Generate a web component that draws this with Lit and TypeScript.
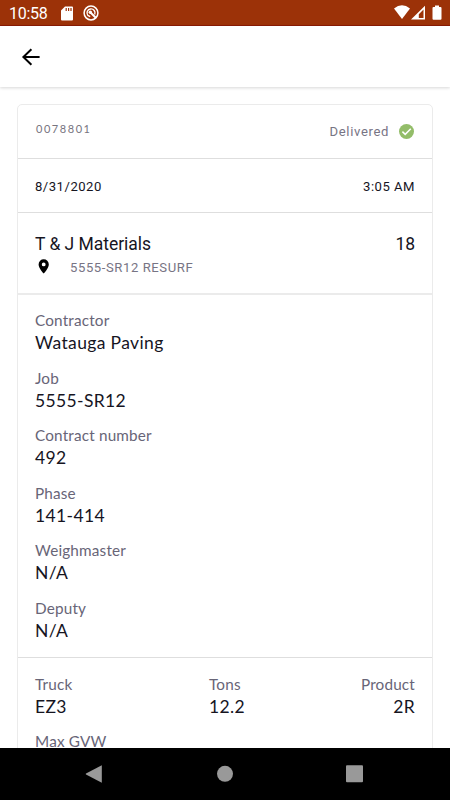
import { LitElement, html, css } from "lit";
import { customElement, property } from "lit/decorators.js";

@customElement("status-bar")
class StatusBar extends LitElement {
  static styles = css`
    :host { display: flex; align-items: center; height: 26px; background: #9c3208; color: #fff; box-sizing: border-box; border-bottom: 1px solid #8b1a04; padding: 1px 0 0 9px; }
    .time { font: 400 16px/24px Roboto, sans-serif; letter-spacing: -0.25px; width: 52px; padding-top: 2px; height: 24px; }
    .spacer { flex: 1; }
    svg { display: block; fill: #fff; }
    .sd { margin-right: 10px; }
  `;
  render() {
    return html`
      <span class="time">10:58</span>
      <svg class="sd" width="12" height="15" viewBox="0 0 12 15"><path fill-rule="evenodd" d="M4 .5h7q1 0 1 1v12q0 1-1 1H1q-1 0-1-1v-9zM4.6 2v3h1.2V2zM7 2v3h1.2V2zM9.4 2v3h1.2V2z"/></svg>
      <svg width="16" height="16" viewBox="0 0 16 16"><g fill="none" stroke="#fff"><circle cx="8" cy="8" r="6.9" stroke-width="1.5"/><path stroke-width="1.4" d="M4.8 10.3A4 4 0 1 1 11.7 9.5M4.8 10.3 7.2 11.6"/><path stroke-width="2" d="M7.3 7.2 12.8 12.7"/></g><circle cx="7.3" cy="7.3" r="1.7"/></svg>
      <span class="spacer"></span>
      <svg width="56" height="16" viewBox="0 0 56 16"><path d="M0 3.4Q8-2.7 16 3.4L8 14z"/><path fill-rule="evenodd" d="M31 .8V14.5H17zM29.5 4.6 24.8 9.2V12.9H29.5z"/><path d="M41 .6h4V2h1.5q1 0 1 1v10.8q0 1-1 1h-7q-1 0-1-1V3q0-1 1-1H41z"/></svg>
    `;
  }
}

@customElement("ticket-field")
class TicketField extends LitElement {
  @property() label = "";
  @property() value = "";
  static styles = css`
    :host { display: block; font-family: Lato, sans-serif; font-weight: 400; white-space: nowrap; }
    .label { font-size: 15.3px; line-height: 21px; letter-spacing: 0.17px; color: #686577; }
    .value { font-size: 17.5px; line-height: 22px; letter-spacing: 0.36px; color: #16151f; min-height: 22px; padding-top: 1px; margin-bottom: -1px; }
  `;
  render() {
    return html`<div class="label">${this.label}</div><div class="value">${this.value}</div>`;
  }
}

@customElement("app-root")
class AppRoot extends LitElement {
  static styles = css`
    :host { display: flex; flex-direction: column; height: 800px; width: 450px; overflow: hidden; background: #fff; font-family: Roboto, sans-serif; font-weight: 400; color: #16151f; }
    .header { flex: none; height: 61px; display: flex; align-items: center; padding-left: 19px; box-sizing: border-box; box-shadow: 0 1px 3px rgba(0,0,0,.16); }
    .header svg { display: block; }
    .content { flex: 1; min-height: 0; overflow: hidden; padding: 17px 17px 0; }
    .card { border: 1px solid #ebebeb; border-radius: 5px; height: 760px; }
    .row { display: flex; justify-content: space-between; padding: 0 17px; box-sizing: border-box; border-bottom: 1px solid #dedede; white-space: nowrap; }
    .top { height: 54px; }
    .number { font: 400 11px/16px Lato, sans-serif; letter-spacing: 1.55px; color: #777480; padding: 16px 0 0 1px; }
    .status { display: flex; align-items: center; height: 16px; margin-top: 18px; font-size: 13.1px; letter-spacing: .63px; color: #777484; }
    .status span { padding-top: 1px; }
    .status svg { margin-left: 9px; }
    .when { height: 54px; align-items: center; font-size: 13.1px; letter-spacing: .5px; padding-top: 1px; }
    .site { height: 82px; border-bottom: 2px solid #ebebeb; padding-top: 20px; }
    .name { font-size: 17.5px; line-height: 22px; letter-spacing: -.03px; }
    .place { display: flex; align-items: center; height: 24px; font-size: 13.1px; letter-spacing: .58px; color: #777484; }
    .place svg { margin: -1px 18px 0 0; }
    .fields { padding: 15px 17px 16px; display: flex; flex-direction: column; gap: 14.5px; border-bottom: 1px solid #dedede; }
    .load { display: grid; grid-template-columns: 174px 1fr auto; row-gap: 14.5px; padding: 16px 17px 0; }
    .right { text-align: right; }
    .nav { flex: none; height: 52px; background: #000; display: block; }
  `;
  fields = [["Contractor", "Watauga Paving"], ["Job", "5555-SR12"], ["Contract number", "492"], ["Phase", "141-414"], ["Weighmaster", "N/A"], ["Deputy", "N/A"]];
  render() {
    return html`
      <status-bar></status-bar>
      <div class="header"><svg width="24" height="24" viewBox="0 0 24 24"><path d="M20.6 12H4.5M12.4 4.3 4.4 12l8 7.7" fill="none" stroke="#000" stroke-width="2"/></svg></div>
      <div class="content"><div class="card">
        <div class="row top">
          <div class="number">0078801</div>
          <div class="status"><span>Delivered</span><svg width="17" height="17" viewBox="0 0 17 17"><circle cx="8.5" cy="8.5" r="7.5" fill="#93bd69"/><path d="M4.4 8.6 7.2 11.4 12.8 5.7" fill="none" stroke="#fff" stroke-width="1.5"/></svg></div>
        </div>
        <div class="row when"><span>8/31/2020</span><span>3:05 AM</span></div>
        <div class="row site">
          <div><div class="name">T &amp; J Materials</div>
          <div class="place"><svg width="17" height="17" viewBox="0 0 17 17"><path fill="#000" fill-rule="evenodd" d="M8.7 1.3a5.1 5.1 0 0 0-5.1 5.1c0 3.8 5.1 9.1 5.1 9.1s5.1-5.3 5.1-9.1a5.1 5.1 0 0 0-5.1-5.1m0 3.2a1.9 1.9 0 1 1 0 3.8 1.9 1.9 0 0 1 0-3.8"/></svg>5555-SR12 RESURF</div></div>
          <div class="name">18</div>
        </div>
        <div class="fields">${this.fields.map(([l, v]) => html`<ticket-field .label=${l} .value=${v}></ticket-field>`)}</div>
        <div class="load">
          <ticket-field label="Truck" value="EZ3"></ticket-field>
          <ticket-field label="Tons" value="12.2"></ticket-field>
          <ticket-field class="right" label="Product" value="2R"></ticket-field>
          <ticket-field label="Max GVW"></ticket-field>
        </div>
      </div></div>
      <svg class="nav" width="450" height="52" viewBox="0 0 450 52"><g fill="#999"><path d="M101.8 17.3V34.7L86 26.4q-.6-.4 0-.8z"/><circle cx="225" cy="25.8" r="8"/><rect x="346" y="17.3" width="17" height="17" rx="1"/></g></svg>
    `;
  }
}
